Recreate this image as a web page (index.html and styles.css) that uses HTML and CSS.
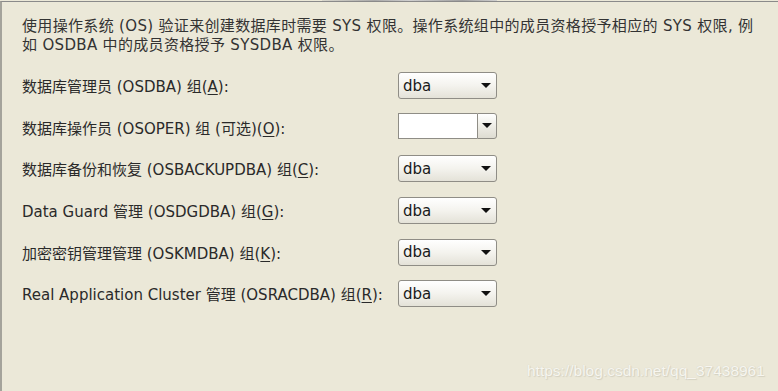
FILE: index.html
```html
<!DOCTYPE html>
<html lang="zh-CN">
<head>
<meta charset="utf-8">
<title>操作系统组</title>
<link rel="stylesheet" href="styles.css">
</head>
<body>
<div class="topstrip"><span class="tab"></span></div>
<div class="panel">
  <p class="intro">使用操作系统 (OS) 验证来创建数据库时需要 SYS 权限。操作系统组中的成员资格授予相应的 SYS 权限, 例<br>如 OSDBA 中的成员资格授予 SYSDBA 权限。</p>
  <div class="form">
    <label class="lbl">数据库管理员 (OSDBA) 组(<u>A</u>):</label>
    <div class="select"><span>dba</span><i class="arrow"></i></div>

    <label class="lbl">数据库操作员 (OSOPER) 组 (可选)(<u>O</u>):</label>
    <div class="combo"><span class="field"></span><span class="btn"><i class="arrow"></i></span></div>

    <label class="lbl">数据库备份和恢复 (OSBACKUPDBA) 组(<u>C</u>):</label>
    <div class="select"><span>dba</span><i class="arrow"></i></div>

    <label class="lbl">Data Guard 管理 (OSDGDBA) 组(<u>G</u>):</label>
    <div class="select"><span>dba</span><i class="arrow"></i></div>

    <label class="lbl">加密密钥管理管理 (OSKMDBA) 组(<u>K</u>):</label>
    <div class="select"><span>dba</span><i class="arrow"></i></div>

    <label class="lbl">Real Application Cluster 管理 (OSRACDBA) 组(<u>R</u>):</label>
    <div class="select"><span>dba</span><i class="arrow"></i></div>
  </div>
</div>
<div class="watermark">https://blog.csdn.net/qq_37438961</div>
</body>
</html>
```
FILE: styles.css
```css
html, body {
  margin: 0;
  padding: 0;
  height: 100%;
  background: #ebe8d8;
  overflow: hidden;
}
body {
  position: relative;
  font-family: "DejaVu Sans", "Noto Sans CJK SC", sans-serif;
  font-size: 15px;
  color: #2a2a2a;
}
.topstrip {
  height: 1px;
  background: #ebe8d8;
  position: relative;
}
.tab {
  position: absolute;
  left: 322px;
  width: 175px;
  top: 0;
  height: 1px;
  background: linear-gradient(90deg, #d8d6cc, #a9a9a9 30%, #cfcfcf 50%, #a0a0a0 80%, #d0d0d0);
}
.panel {
  box-sizing: border-box;
  height: calc(100% - 1px);
  border-top: 1px solid #8a8a8a;
  border-left: 2px solid #a4a39b;
  padding: 15px 0 0 20px;
}
.intro {
  margin: 0;
  line-height: 19px;
  color: #333;
  white-space: nowrap;
  letter-spacing: 0.33px;
}
.form {
  display: grid;
  grid-template-columns: 376px 100px;
  grid-auto-rows: 41.6px;
  align-items: center;
  margin-top: 10px;
}
.lbl {
  color: #2a2a2a;
}
.lbl u {
  text-underline-offset: 2px;
}
.select {
  box-sizing: border-box;
  width: 99px;
  height: 27px;
  border: 1px solid #8f8d86;
  border-radius: 3px;
  background: linear-gradient(#ffffff, #f4f3ee 50%, #e4e2d8);
  display: flex;
  align-items: center;
  justify-content: space-between;
  padding: 0 5px 0 4px;
  font-family: "DejaVu Sans", sans-serif;
  font-size: 15px;
  color: #1a1a1a;
}
.arrow {
  width: 0;
  height: 0;
  border-left: 5px solid transparent;
  border-right: 5px solid transparent;
  border-top: 5px solid #111;
}
.combo {
  display: flex;
  width: 100px;
  height: 26px;
  align-self: start;
  margin-top: 6px;
}
.field {
  box-sizing: border-box;
  width: 79px;
  height: 26px;
  background: #fff;
  border: 1px solid #8f8d86;
  border-right: none;
}
.btn {
  box-sizing: border-box;
  width: 20px;
  height: 26px;
  border: 1px solid #8f8d86;
  border-radius: 0 3px 3px 0;
  background: linear-gradient(#ffffff, #eeede6 50%, #dedcd2);
  display: flex;
  align-items: center;
  justify-content: center;
}
.watermark {
  position: absolute;
  left: 527px;
  top: 362px;
  font-family: "Liberation Sans", Arial, sans-serif;
  font-size: 15.5px;
  color: #f7f6f0;
  text-shadow: 0 0 1px #cfccbd, 1px 1px 1px #d4d1c2;
}
```
